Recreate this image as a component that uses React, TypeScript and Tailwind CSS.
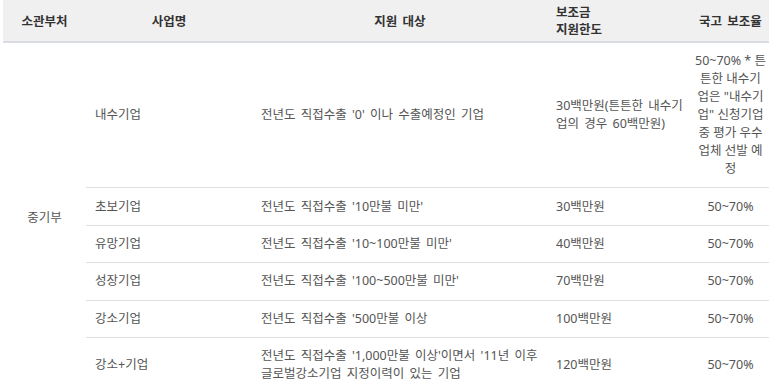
const rows = [
  {
    name: "내수기업",
    target: ["전년도 직접수출 '0' 이나 수출예정인 기업"],
    limit: "30백만원(튼튼한 내수기업의 경우 60백만원)",
    rate: ["50~70% * 튼", "튼한 내수기", '업은 "내수기', '업" 신청기업', "중 평가 우수", "업체 선발 예", "정"],
  },
  { name: "초보기업", target: ["전년도 직접수출 '10만불 미만'"], limit: "30백만원", rate: ["50~70%"] },
  { name: "유망기업", target: ["전년도 직접수출 '10~100만불 미만'"], limit: "40백만원", rate: ["50~70%"] },
  { name: "성장기업", target: ["전년도 직접수출 '100~500만불 미만'"], limit: "70백만원", rate: ["50~70%"] },
  { name: "강소기업", target: ["전년도 직접수출 '500만불 이상"], limit: "100백만원", rate: ["50~70%"] },
  {
    name: "강소+기업",
    target: ["전년도 직접수출 '1,000만불 이상'이면서 '11년 이후", "글로벌강소기업 지정이력이 있는 기업"],
    limit: "120백만원",
    rate: ["50~70%"],
  },
];

export default function App() {
  return (
    <div className="w-[773px] h-[392px] overflow-hidden bg-white pl-[3px] font-['Noto_Sans','Noto_Sans_CJK_KR',sans-serif] text-[12.5px] [word-spacing:2px]">
      <table className="w-[766px] table-fixed border-collapse">
        <colgroup>
          <col className="w-[83px]" />
          <col className="w-[166px]" />
          <col className="w-[296px]" />
          <col className="w-[144px]" />
          <col className="w-[77px]" />
        </colgroup>
        <thead>
          <tr className="bg-[#f0f0f0] border-b-2 border-[#d9dde2] text-[#333] font-bold leading-[17px]">
            <th className="h-[41px] pt-[4px] pb-[3px] text-center font-bold">소관부처</th>
            <th className="pt-[4px] pb-[3px] text-center font-bold">사업명</th>
            <th className="pt-[4px] pb-[3px] text-center font-bold">지원 대상</th>
            <th className="pt-[4px] pb-[3px] pl-[8px] text-left font-bold">
              보조금
              <br />
              지원한도
            </th>
            <th className="pt-[4px] pb-[3px] text-center font-bold">국고 보조율</th>
          </tr>
        </thead>
        <tbody className="text-[#555] leading-[18px]">
          {rows.map((r, i) => (
            <tr key={r.name} className={i < rows.length - 1 ? "border-b border-[#dcdfe3]" : ""}>
              {i === 0 && (
                <td rowSpan={rows.length} className="text-center align-middle bg-white">
                  중기부
                </td>
              )}
              <td className="py-[9.2px] px-[9px] align-middle">{r.name}</td>
              <td className="py-[9.2px] px-[9px] align-middle">
                {r.target.map((t) => (
                  <div key={t}>{t}</div>
                ))}
              </td>
              <td className="py-[9.2px] pl-[8px] pr-0 align-middle">{r.limit}</td>
              <td className="py-[9.2px] px-0 text-center align-middle whitespace-nowrap [word-spacing:0px]">
                {r.rate.map((t) => (
                  <div key={t}>{t}</div>
                ))}
              </td>
            </tr>
          ))}
        </tbody>
      </table>
    </div>
  );
}
